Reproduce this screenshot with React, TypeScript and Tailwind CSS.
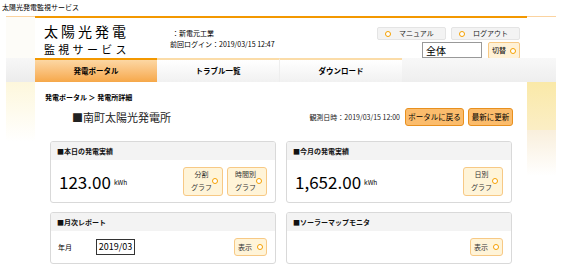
const jp = { fontFamily: '"Noto Sans CJK JP", "Liberation Sans", sans-serif' }

function Dot() {
  return <span className="inline-block h-[6px] w-[6px] rounded-full border-[1.5px] border-[#f5a000] bg-white" />
}

function TopButton({ label }: { label: string }) {
  return (
    <div className="flex h-[13px] w-[69px] items-center gap-[8px] rounded-[2px] border border-[#e4e4e4] bg-[#f3f3f3] pl-[7px] text-[7px] text-[#222]">
      <Dot />
      <span>{label}</span>
    </div>
  )
}

function GraphButton({ top, bottom }: { top: string; bottom: string }) {
  return (
    <div className="flex h-[29px] w-[40px] items-center justify-between rounded-[3px] border border-[#f7c985] bg-[#fff4d8] pl-[7px] pr-[4px] text-[7px] leading-[13px] text-[#333]">
      <div className="flex flex-col items-center">
        <span>{top}</span>
        <span>{bottom}</span>
      </div>
      <Dot />
    </div>
  )
}

function ShowButton() {
  return (
    <div className="flex h-[18px] w-[33px] items-center justify-center gap-[5px] rounded-[3px] border border-[#f7c985] bg-[#fff4d8] text-[7px] text-[#333]">
      <span>表示</span>
      <Dot />
    </div>
  )
}

function Card({ title, children, height }: { title: string; children: React.ReactNode; height: string }) {
  return (
    <div className={`flex w-[226px] flex-col overflow-hidden rounded-[3px] border border-[#d9d9d9] bg-white ${height}`}>
      <div className="flex h-[18px] items-center bg-[#f3f3f3] pl-[6px] text-[7px] font-bold text-[#111]">■{title}</div>
      {children}
    </div>
  )
}

export default function App() {
  return (
    <div className="h-[270px] w-[562px] overflow-hidden bg-white text-black" style={jp}>
      <div className="h-[16px] pl-[2px] pt-[1px] text-[7px] leading-[12px]">太陽光発電監視サービス</div>

      <div className="mx-[6px] flex">
        {/* left side */}
        <div className="flex w-[29px] flex-col">
          <div className="h-[42px] border-t border-[#fbd3a0] bg-[#fdfcf8]" />
          <div className="h-[24px] bg-gradient-to-b from-[#f7f7f7] to-[#ececec]" />
          <div className="h-[60px] bg-gradient-to-b from-[#fdf7dc] to-white" />
        </div>

        {/* center */}
        <div className="flex w-[492px] flex-col">
          <div className="flex h-[42px] border-t-2 border-[#f39800] bg-white">
            <div className="flex w-[135px] flex-col pl-[9px] pt-[4px]">
              <span className="text-[14px] leading-[18px] tracking-[3px]">太陽光発電</span>
              <span className="mt-[1px] text-[11px] leading-[16px] tracking-[3.3px]">監視サービス</span>
            </div>
            <div className="flex flex-col pt-[10px] text-[7px] leading-[11px]">
              <span className="pl-[2px]">：新電元工業</span>
              <span>前回ログイン：2019/03/15 12:47</span>
            </div>
            <div className="ml-auto flex flex-col items-end pr-[7px] pt-[9px]">
              <div className="flex gap-[5px]">
                <TopButton label="マニュアル" />
                <TopButton label="ログアウト" />
              </div>
              <div className="mt-[2px] flex gap-[6px]">
                <div className="flex h-[16px] w-[60px] items-center border border-[#999] bg-white pl-[3px] text-[10px]">全体</div>
                <div className="flex h-[17px] w-[32px] items-center justify-center gap-[4px] rounded-[2px] border border-[#f7c985] bg-[#fff1d6] text-[7px]">
                  <span>切替</span>
                  <Dot />
                </div>
              </div>
            </div>
          </div>

          <div className="flex h-[24px] text-[7.5px] font-bold">
            <div className="flex w-[122px] items-center justify-center border-t-2 border-[#f39800] bg-gradient-to-b from-[#fcd7a3] to-[#f6a848]">発電ポータル</div>
            <div className="flex w-[123px] items-center justify-center border-r border-t-2 border-[#eee] border-t-[#fbdca8] bg-gradient-to-b from-white to-[#f1f1f1]">トラブル一覧</div>
            <div className="flex w-[122px] items-center justify-center border-t-2 border-[#fbdca8] bg-gradient-to-b from-white to-[#f1f1f1]">ダウンロード</div>
            <div className="flex-1 bg-gradient-to-b from-[#f8f8f8] to-[#eeeeee]" />
          </div>

          <div className="pl-[10px] pt-[10px] text-[7px] font-bold leading-[10px]">発電ポータル ＞ 発電所詳細</div>

          <div className="mt-[6px] flex items-center pr-[14px]">
            <span className="pl-[37px] text-[11px] text-[#222]">■南町太陽光発電所</span>
            <span className="ml-auto text-[7px] text-[#222]">観測日時：2019/03/15 12:00</span>
            <div className="ml-[5px] flex h-[18px] w-[59px] items-center justify-center rounded-[3px] border border-[#e8901e] bg-[#fbbc6c] text-[7.5px]">ポータルに戻る</div>
            <div className="ml-[4px] flex h-[18px] w-[45px] items-center justify-center rounded-[3px] border border-[#e8901e] bg-[#fbbc6c] text-[7.5px]">最新に更新</div>
          </div>

          <div className="mt-[15px] flex gap-[10px] pl-[15px]">
            <Card title="本日の発電実績" height="h-[62px]">
              <div className="flex flex-1 items-center pl-[8px] pr-[8px]">
                <span className="text-[17px] leading-none">123.00</span>
                <span className="ml-[3px] mt-[4px] text-[6.5px]">kWh</span>
                <div className="ml-auto flex gap-[4px]">
                  <GraphButton top="分割" bottom="グラフ" />
                  <GraphButton top="時間別" bottom="グラフ" />
                </div>
              </div>
            </Card>
            <Card title="今月の発電実績" height="h-[62px]">
              <div className="flex flex-1 items-center pl-[8px] pr-[8px]">
                <span className="text-[17px] leading-none">1,652.00</span>
                <span className="ml-[3px] mt-[4px] text-[6.5px]">kWh</span>
                <div className="ml-auto">
                  <GraphButton top="日別" bottom="グラフ" />
                </div>
              </div>
            </Card>
          </div>

          <div className="mt-[9px] flex gap-[10px] pl-[15px]">
            <Card title="月次レポート" height="h-[52px]">
              <div className="flex flex-1 items-center pl-[7px] pr-[8px]">
                <span className="w-[38px] text-[7px]">年月</span>
                <div className="flex h-[16px] w-[39px] items-center justify-center border border-[#333] text-[9px]">2019/03</div>
                <div className="ml-auto">
                  <ShowButton />
                </div>
              </div>
            </Card>
            <Card title="ソーラーマップモニタ" height="h-[52px]">
              <div className="flex flex-1 items-center justify-end pr-[8px]">
                <ShowButton />
              </div>
            </Card>
          </div>
        </div>

        {/* right side */}
        <div className="flex w-[29px] flex-col">
          <div className="h-[42px] border-t border-[#fbd3a0] bg-white" />
          <div className="h-[24px] bg-gradient-to-b from-[#f8f8f8] to-[#eeeeee]" />
          <div className="h-[48px] bg-gradient-to-b from-[#fae9a8] to-[#fbeec5]" />
          <div className="h-[46px] bg-gradient-to-b from-[#f9efdc] to-white" />
        </div>
      </div>
    </div>
  )
}
